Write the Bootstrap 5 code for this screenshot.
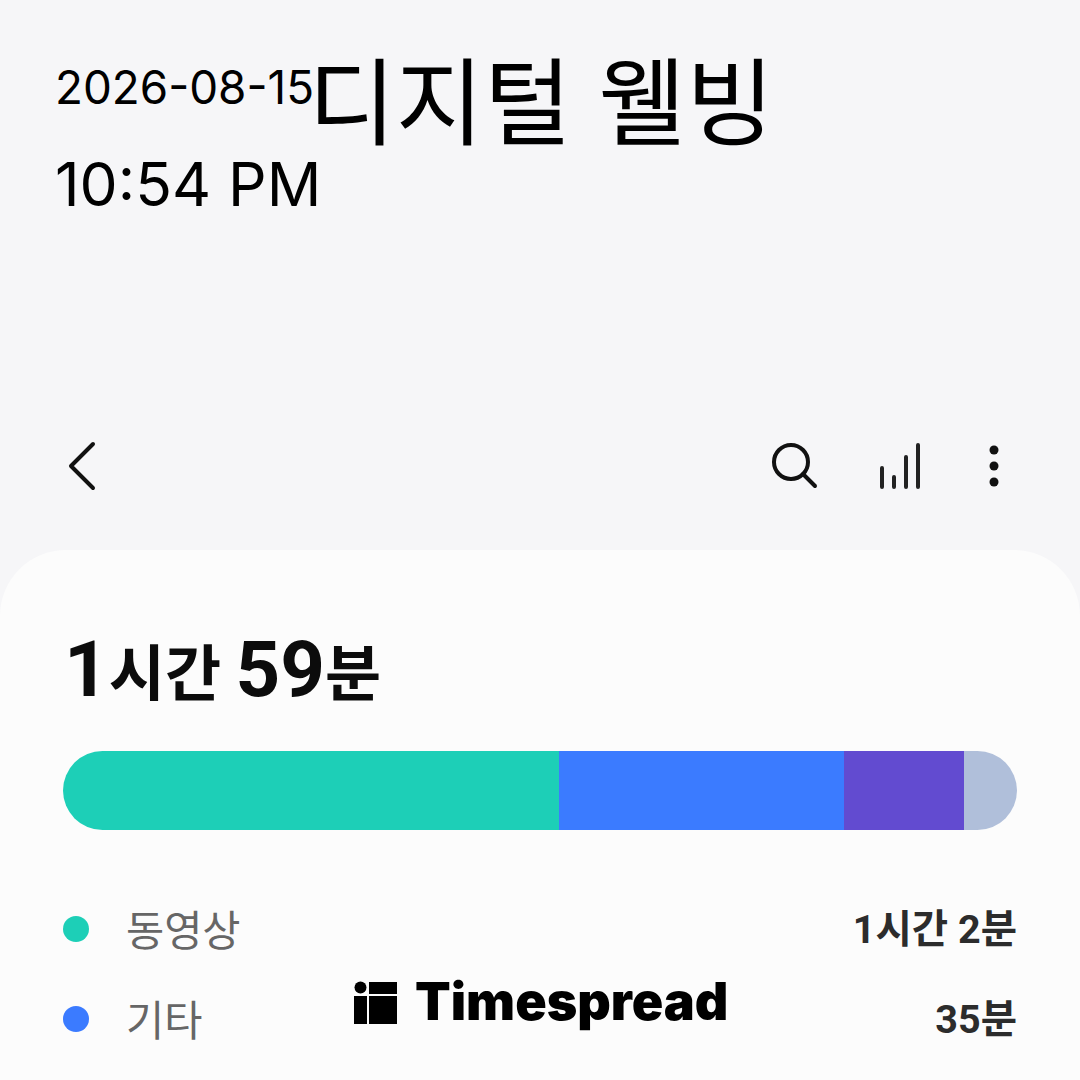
<!DOCTYPE html>
<html lang="ko">
<head>
  <meta charset="UTF-8">
  <meta name="viewport" content="width=device-width, initial-scale=1.0">
  <title>디지털 웰빙</title>
  <link href="https://cdn.jsdelivr.net/npm/bootstrap@5.3.2/dist/css/bootstrap.min.css" rel="stylesheet">
  <style>
    html, body { height: 100%; }
    body {
      width: 1080px;
      height: 1080px;
      overflow: hidden;
      background-color: #f6f6f8;
      color: #000;
      font-family: Inter, "Noto Sans CJK KR", sans-serif;
      position: relative;
    }
    .page-head { padding: 58px 0 0 55px; height: 430px; }
    .stamp-col { width: 253px; }
    .stamp-date { font-size: 45.8px; line-height: 60px; white-space: nowrap; }
    .stamp-time { font-size: 60.5px; line-height: 72px; margin-top: 30px; white-space: nowrap; }
    .page-title { font-family: "Noto Sans CJK KR", sans-serif; font-size: 95.5px; line-height: 125px; font-weight: 400; margin: -24px 0 0; white-space: nowrap; }
    .tool-bar { height: 120px; padding: 0 80px 49px 67px; }
    .tool-right { gap: 61px; }
    .tool-bars { margin-right: 6px; }
    .sheet {
      background-color: #fcfcfc;
      border-radius: 66px 66px 0 0;
      height: 530px;
      padding: 78px 63px 0;
    }
    .total-time { font-family: Roboto, sans-serif; font-size: 78px; line-height: 84px; font-weight: 700; color: #0c0c0c; padding-left: 1px; white-space: nowrap; word-spacing: -5px; }
    .total-time .unit { font-family: "Noto Sans CJK KR", sans-serif; font-size: 61px; font-weight: 700; }
    .usage-bar { height: 79px; border-radius: 40px; margin-top: 39px; overflow: hidden; }
    .seg-video { width: 496px; background-color: #1dcfb7; }
    .seg-other { width: 285px; background-color: #3b7bff; }
    .seg-third { width: 120px; background-color: #624bd0; }
    .seg-rest { flex: 1; background-color: #b0bfda; }
    .legend-row { height: 90px; }
    .legend-list { margin-top: 54px; }
    .legend-dot { width: 26px; height: 26px; border-radius: 50%; margin-right: 37px; }
    .legend-name { font-family: "Noto Sans CJK KR", sans-serif; font-size: 41.5px; line-height: 56px; padding-bottom: 2px; color: #666; }
    .legend-value { font-family: Roboto, "Noto Sans CJK KR", sans-serif; font-size: 39.5px; font-weight: 700; color: #2c2c2c; padding-top: 1px; }
    .watermark { position: absolute; left: 354px; top: 972px; gap: 18px; }
    .watermark-text { font-family: Inter, sans-serif; font-weight: 900; font-size: 52px; line-height: 60px; color: #000; }
  </style>
</head>
<body>

  <div class="page-head d-flex align-items-start">
    <div class="stamp-col">
      <div class="stamp-date">2026-08-15</div>
      <div class="stamp-time">10:54 PM</div>
    </div>
    <h1 class="page-title">디지털 웰빙</h1>
  </div>

  <div class="tool-bar d-flex justify-content-between align-items-center">
    <svg width="30" height="50" viewBox="0 0 30 50" fill="none" stroke="#111" stroke-width="4" stroke-linecap="round" stroke-linejoin="round"><path d="M26 3 L4 25 L26 47"/></svg>
    <div class="tool-right d-flex align-items-center">
      <svg width="48" height="48" viewBox="0 0 48 48" fill="none" stroke="#111" stroke-width="4" stroke-linecap="round"><circle cx="21" cy="20" r="17"/><path d="M33 32 L45 44"/></svg>
      <svg class="tool-bars" width="42" height="46" viewBox="0 0 42 46" fill="none" stroke="#222" stroke-width="4" stroke-linecap="round"><path d="M3 25 V44 M15 34 V44 M27 14 V44 M39 2 V44"/></svg>
      <svg width="12" height="44" viewBox="0 0 12 44" fill="#111"><circle cx="6" cy="6" r="4.5"/><circle cx="6" cy="22" r="4.5"/><circle cx="6" cy="38" r="4.5"/></svg>
    </div>
  </div>

  <div class="sheet">
    <div class="total-time">1<span class="unit">시간</span> 59<span class="unit">분</span></div>
    <div class="usage-bar d-flex">
      <div class="seg-video"></div>
      <div class="seg-other"></div>
      <div class="seg-third"></div>
      <div class="seg-rest"></div>
    </div>
    <div class="legend-list">
      <div class="legend-row d-flex align-items-center">
        <span class="legend-dot seg-video"></span>
        <span class="legend-name flex-grow-1">동영상</span>
        <span class="legend-value">1시간 2분</span>
      </div>
      <div class="legend-row d-flex align-items-center">
        <span class="legend-dot seg-other"></span>
        <span class="legend-name flex-grow-1">기타</span>
        <span class="legend-value">35분</span>
      </div>
    </div>
  </div>

  <div class="watermark d-flex align-items-center">
    <svg width="43" height="43" viewBox="0 0 43 43" fill="#000"><circle cx="6.5" cy="6.5" r="6"/><rect x="0" y="15" width="13" height="28"/><rect x="15" y="1" width="28" height="12"/><rect x="15" y="15" width="28" height="28"/></svg>
    <span class="watermark-text">Timespread</span>
  </div>

  <script src="https://cdn.jsdelivr.net/npm/bootstrap@5.3.2/dist/js/bootstrap.bundle.min.js"></script>
</body>
</html>
